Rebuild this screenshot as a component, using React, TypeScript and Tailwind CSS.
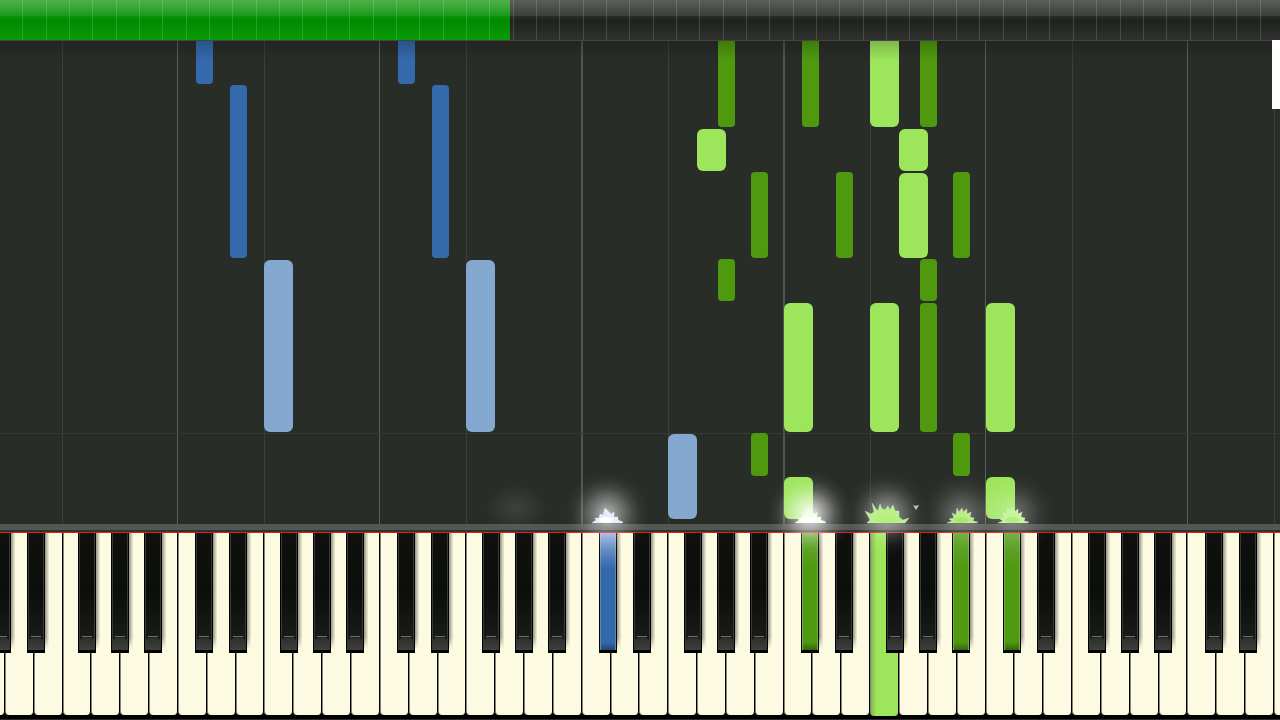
import { clsx } from "clsx"

type Tone = "green" | "lime" | "blue" | "sky"

const STAGE_WIDTH = 1280
const WHITE_WIDTH = STAGE_WIDTH / 44.36
const OCTAVE_WIDTH = WHITE_WIDTH * 7
const FIRST_KEY = -24
const BLACK_OFFSETS = [17, 51, 102, 135, 168]

const pct = (value: number) => `${(value / STAGE_WIDTH) * 100}%`

const noteTones: Record<Tone, string> = {
  green: "bg-[#4f990f] rounded-sm",
  lime: "bg-[#9de55b] rounded-md",
  blue: "bg-[#3469ac] rounded-sm",
  sky: "bg-[#85a8d0] rounded-md",
}

interface Note {
  x: number
  y: number
  h: number
  tone: Tone
}

const notes: Note[] = [
  { x: 196, y: -8, h: 52, tone: "blue" },
  { x: 398, y: -8, h: 52, tone: "blue" },
  { x: 230, y: 45, h: 173, tone: "blue" },
  { x: 432, y: 45, h: 173, tone: "blue" },
  { x: 264, y: 220, h: 172, tone: "sky" },
  { x: 466, y: 220, h: 172, tone: "sky" },
  { x: 668, y: 394, h: 85, tone: "sky" },
  { x: 718, y: -8, h: 95, tone: "green" },
  { x: 802, y: -8, h: 95, tone: "green" },
  { x: 870, y: -8, h: 95, tone: "lime" },
  { x: 920, y: -8, h: 95, tone: "green" },
  { x: 697, y: 89, h: 42, tone: "lime" },
  { x: 899, y: 89, h: 42, tone: "lime" },
  { x: 751, y: 132, h: 86, tone: "green" },
  { x: 836, y: 132, h: 86, tone: "green" },
  { x: 899, y: 133, h: 85, tone: "lime" },
  { x: 953, y: 132, h: 86, tone: "green" },
  { x: 718, y: 219, h: 42, tone: "green" },
  { x: 920, y: 219, h: 42, tone: "green" },
  { x: 784, y: 263, h: 129, tone: "lime" },
  { x: 870, y: 263, h: 129, tone: "lime" },
  { x: 920, y: 263, h: 129, tone: "green" },
  { x: 986, y: 263, h: 129, tone: "lime" },
  { x: 751, y: 393, h: 43, tone: "green" },
  { x: 953, y: 393, h: 43, tone: "green" },
  { x: 784, y: 437, h: 42, tone: "lime" },
  { x: 986, y: 437, h: 42, tone: "lime" },
]

const pressedBlack: Record<string, Tone> = {
  "3-0": "blue",
  "4-0": "green",
  "4-4": "green",
  "5-0": "green",
}

const PRESSED_WHITE = 31

function SongProgress() {
  return (
    <div
      role="progressbar"
      aria-label="Song position"
      aria-valuenow={40}
      aria-valuemin={0}
      aria-valuemax={100}
      className="relative z-10 h-10 shrink-0 overflow-hidden bg-linear-to-b from-[#5c605b] via-[#3b3e39] via-40% to-[#31332f]"
    >
      <div className="absolute inset-x-0 top-4 bottom-0 bg-linear-to-b from-[#292b27] via-[#20221e] via-20% to-[#30322f]" />
      <div className="absolute inset-y-0 left-0 w-[39.85%] bg-linear-to-b from-[#4eb04a] to-[#159a15] to-40%">
        <div className="absolute inset-x-0 top-4 bottom-0 bg-linear-to-b from-[#0c930c] via-[#008900] via-20% to-[#0a9b08]" />
      </div>
      <div className="absolute inset-0 flex">
        {Array.from({ length: 55 }, (_, i) => (
          <span key={i} className="w-[1.824%] shrink-0 border-r border-white/15" />
        ))}
      </div>
    </div>
  )
}

function Guides() {
  return (
    <>
      {Array.from({ length: 7 }, (_, i) => (
        <span
          key={`f${i}`}
          className="absolute inset-y-0 w-px bg-[#3b3e3a]"
          style={{ left: pct(62 + i * OCTAVE_WIDTH) }}
        />
      ))}
      {Array.from({ length: 6 }, (_, i) => (
        <span
          key={`c${i}`}
          className={clsx(
            "absolute inset-y-0",
            i === 2 || i === 3 ? "w-0.5 bg-[#525450]" : "w-px bg-[#5c5e5a]"
          )}
          style={{ left: pct(177 + i * OCTAVE_WIDTH) }}
        />
      ))}
      <span className="absolute inset-x-0 top-[393px] h-px bg-[#363935]" />
    </>
  )
}

const flameWide =
  "M2 23 L5 20 L3 16 L0 11 L6 14 L9 12 L7 3 L11 9 L13 11 L15 4 L17 9 L20 10 L23 6 L25 10 L28 5 L30 11 L34 11 L34 17 L38 20 L44 18 L40 23Z"
const flameNarrow =
  "M0 23 L5 21 L2 19 L7 18 L5 13 L9 15 L10 8 L12 12 L15 8 L16 12 L20 9 L20 14 L24 12 L23 17 L27 18 L26 21 L31 22 L29 23Z"
const flameWhite =
  "M0 23 L4 20 L3 18 L7 18 L8 14 L11 15 L13 8 L16 11 L19 14 L22 12 L22 17 L26 17 L26 20 L31 22 L30 23Z"

interface Spark {
  x: number
  w: number
  path: string
  fill: string
  core: string
  glow: number
}

const sparks: Spark[] = [
  { x: 592, w: 30, path: flameWhite, fill: "#e3edfb", core: "#ffffff", glow: 0.65 },
  { x: 795, w: 30, path: flameWhite, fill: "#f4ffea", core: "#ffffff", glow: 0.95 },
  { x: 865, w: 44, path: flameWide, fill: "#b9f088", core: "#b3ef7b", glow: 0.55 },
  { x: 947, w: 30, path: flameNarrow, fill: "#b9ee8b", core: "#a8e870", glow: 0.35 },
  { x: 998, w: 30, path: flameNarrow, fill: "#c6f49c", core: "#b3ef7b", glow: 0.35 },
]

function Sparks() {
  return (
    <div className="pointer-events-none absolute inset-x-0 bottom-0 z-20 h-24">
      <span
        className="absolute -bottom-2 h-12 w-16 bg-radial from-white/10 to-transparent to-70%"
        style={{ left: pct(484) }}
      />
      {sparks.map((s, i) => (
        <svg
          key={s.x}
          viewBox="-40 -50 120 110"
          className="absolute -bottom-9 h-[110px] w-[120px]"
          style={{ left: pct(s.x - 40) }}
          aria-hidden="true"
        >
          <defs>
            <radialGradient id={`glow${i}`}>
              <stop offset="0" stopColor="#fff" stopOpacity={s.glow} />
              <stop offset="0.3" stopColor="#fff" stopOpacity={s.glow * 0.6} />
              <stop offset="0.6" stopColor="#fff" stopOpacity={s.glow * 0.22} />
              <stop offset="0.8" stopColor="#fff" stopOpacity={s.glow * 0.06} />
              <stop offset="1" stopColor="#fff" stopOpacity="0" />
            </radialGradient>
          </defs>
          <ellipse cx={s.w / 2} cy="14" rx="42" ry="42" fill={`url(#glow${i})`} />
          <path d={s.path} fill={s.fill} stroke="#f3ffe8" strokeOpacity="0.5" strokeWidth="0.6" />
          <ellipse cx={s.w / 2 - 1} cy="20" rx={s.w / 4} ry="3" fill={s.core} />
        </svg>
      ))}
      <svg viewBox="0 0 6 5" className="absolute bottom-3.5 h-[5px] w-1.5" style={{ left: pct(913) }} aria-hidden="true">
        <path d="M0 0 L2 1 L6 0 L3 5Z" fill="#c7cac5" />
      </svg>
    </div>
  )
}

function NoteLane() {
  return (
    <main className="relative min-h-[484px] flex-1 bg-[#292d28]">
      <div className="absolute inset-0 overflow-hidden">
        <Guides />
        {notes.map((n) => (
          <span
            key={`${n.x}-${n.y}`}
            className={clsx("absolute", noteTones[n.tone])}
            style={{
              left: pct(n.x),
              top: n.y,
              height: n.h,
              width: pct(n.tone === "lime" || n.tone === "sky" ? 29 : 17),
            }}
          />
        ))}
        <div className="absolute inset-x-0 top-0 h-5 border-t border-[#444641] bg-linear-to-b from-black/20 to-transparent" />
      </div>
      <div className="absolute top-0 right-0 h-[69px] w-2 bg-white" />
      <Sparks />
    </main>
  )
}

const pressedKey: Record<Tone, string> = {
  green: "from-[#63a52d] via-[#4f9a10] to-[#4f9a10]",
  lime: "from-[#b4ec80] via-[#9de55b] to-[#9de55b]",
  blue: "from-[#8dabd8] via-[#3469ac] to-[#3469ac]",
  sky: "from-[#b7cce6] via-[#85a8d0] to-[#85a8d0]",
}

function BlackKey({ x, tone, label }: { x: number; tone?: Tone; label: string }) {
  return (
    <button
      type="button"
      aria-label={label}
      className="absolute top-0 flex h-30 flex-col items-stretch justify-start bg-black px-px"
      style={{ left: pct(x), width: pct(18) }}
    >
      <span className="absolute top-0 bottom-1 left-full w-1 bg-linear-to-r from-black/40 to-black/5 mask-b-from-90%" />
      {tone ? (
        <span className={clsx("flex h-[117px] flex-col justify-end border-x border-white/20 bg-linear-to-b via-30%", pressedKey[tone])}>
          <span className="h-2 bg-linear-to-b from-transparent to-black/35" />
        </span>
      ) : (
        <span className="flex h-[117px] flex-col border-x border-[#383a36] bg-linear-to-b from-[#10110e] via-[#0b0e0a] to-[#1d1f1c]">
          <span className="flex-1" />
          <span className="mx-0.5 h-0.5 border-t border-[#6c6e6a] bg-[#222421]" />
          <span className="h-3 rounded-t-sm bg-linear-to-b from-[#2e302d] to-[#3e3f3c]" />
        </span>
      )}
    </button>
  )
}

function Keyboard() {
  const names = ["C sharp", "D sharp", "F sharp", "G sharp", "A sharp"]
  return (
    <footer className="shrink-0 overflow-hidden">
      <div className="h-1.5 bg-[#545652]" />
      <div className="h-0.5 bg-[#30322f]" />
      <div className="h-px bg-[#d9201c]" />
      <div className="relative h-[187px] overflow-hidden bg-black">
        <div className="flex h-[183px] items-start">
          {Array.from({ length: 46 }, (_, i) => (
            <button
              key={i}
              type="button"
              aria-label={`White key ${i + 1}`}
              className={clsx(
                "shrink-0 rounded-b-sm border-r border-l border-r-black border-l-[#85847a]",
                i === PRESSED_WHITE
                  ? "h-[183px] bg-linear-to-r from-[#7fb94a] to-[#9de55b] to-20%"
                  : "h-[182px] bg-[#fcfae0]"
              )}
              style={{ width: pct(WHITE_WIDTH), marginLeft: i === 0 ? pct(FIRST_KEY) : 0 }}
            />
          ))}
        </div>
        {Array.from({ length: 7 }, (_, octave) =>
          BLACK_OFFSETS.map((offset, i) => (
            <BlackKey
              key={`${octave}-${i}`}
              label={`${names[i]} ${octave + 1}`}
              x={FIRST_KEY + octave * OCTAVE_WIDTH + offset}
              tone={pressedBlack[`${octave}-${i}`]}
            />
          ))
        )}
        <div className="absolute inset-x-0 bottom-0 h-px bg-[#2b2c2a]" />
      </div>
    </footer>
  )
}

export default function App() {
  return (
    <div className="flex min-h-screen flex-col overflow-hidden bg-[#292d28] font-['Liberation_Sans',sans-serif]">
      <SongProgress />
      <NoteLane />
      <Keyboard />
    </div>
  )
}
